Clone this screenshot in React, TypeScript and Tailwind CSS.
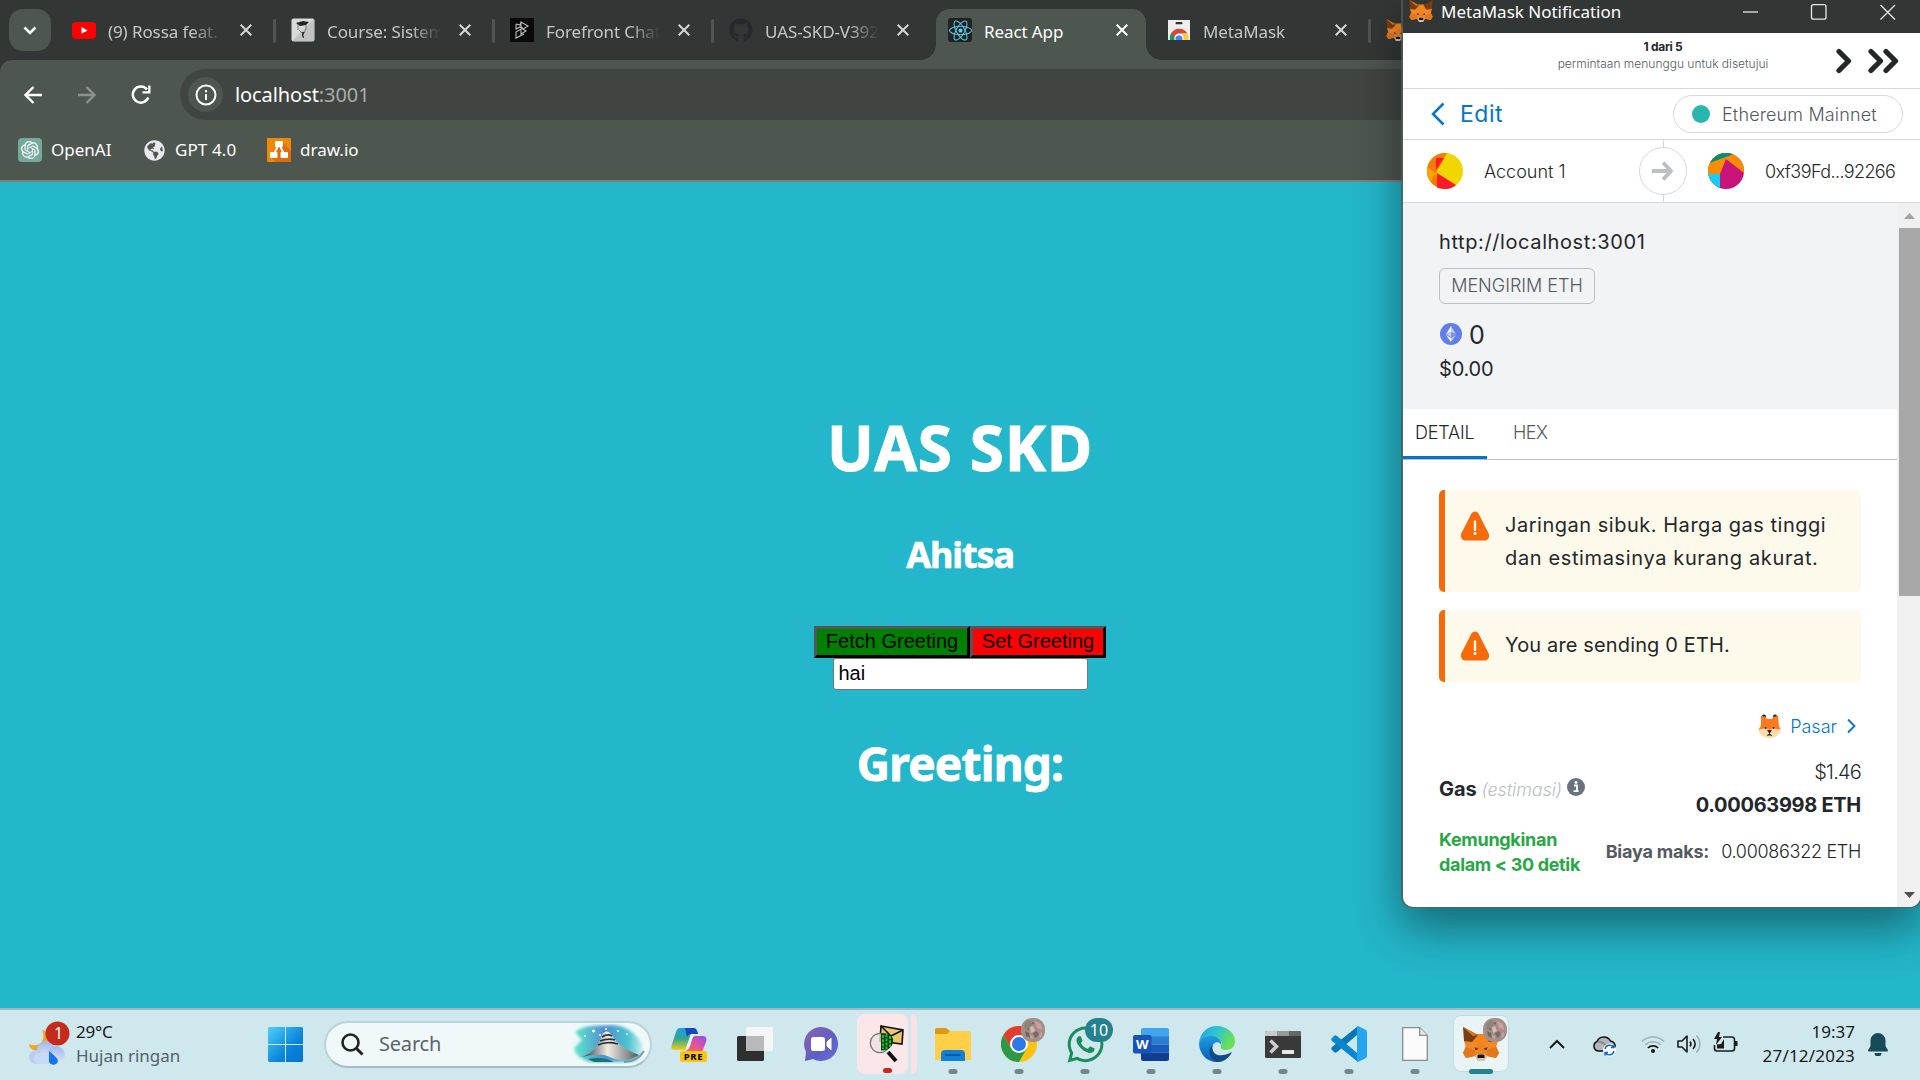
import type { ReactNode } from "react";
import { FaGithub, FaReact, FaWhatsapp, FaGlobeAmericas } from "react-icons/fa";
import { SiOpenai } from "react-icons/si";

/* ---------- icons ---------- */

function Fox({ className }: { className: string }) {
  return (
    <svg viewBox="0 0 36 34" className={className}>
      <path d="M1 14 14 7h8l13 7-2 6 3 6-3 5-9-2-3 5h-6l-3-5-9 2-3-5 3-6z" fill="#f6851b" />
      <path d="M36 0 22 8l4 7 9-1z" fill="#763d16" />
      <path d="M0 0l15 8-6 7-8-1z" fill="#763d16" />
      <path d="M0 0l15 8-5 1z" fill="#e2761b" />
      <path d="M0 26l3-7 9 4v6l-9 2zM36 26l-3-7-9 4v6l9 2z" fill="#e4761b" />
      <path d="M12 23l3-7h6l3 7-3 7h-6z" fill="#f0821f" />
      <path d="M9 15l6 1-3 7-9-3zM27 15l-6 1 3 7 9-3z" fill="#f08a2c" />
      <path d="M11.500 20l4 2-3 1zM24.500 20l-4 2 3 1z" fill="#233447" />
      <path d="M12 29l3-2h6l3 2-3 5h-6z" fill="#d7c1b3" />
      <path d="M14.500 28.500l1-1h5l1 1v2.500h-7z" fill="#161616" />
    </svg>
  );
}

function CloseX({ color }: { color: string }) {
  return (
    <svg viewBox="0 0 12 12" className="size-3 shrink-0">
      <path d="M.7.7l10.600 10.600M11.300.7L.7 11.300" stroke={color} strokeWidth="2" fill="none" />
    </svg>
  );
}

function Photo({ className }: { className: string }) {
  return (
    <svg viewBox="0 0 24 24" className={className}>
      <rect width="24" height="24" rx="11" fill="#a58e8a" />
      <path d="M3 6l5-4 4 3-3 5-5 2z" fill="#8b8478" />
      <path d="M14 3l6 3 1 6-5-2z" fill="#c9a2a0" />
      <path d="M9 9l3-1 2 5-4 2z" fill="#d8b9ae" />
      <path d="M4 13l4 2 1 5-4-2z" fill="#6f665d" />
      <path d="M12 15l4-2 2 4-4 3z" fill="#7a6a66" />
      <path d="M16 11l3 1-1 3z" fill="#cf7d8b" />
      <path d="M9 17l3 1v3l-3-1zM18 16l3-2v4l-2 2z" fill="#c3a29b" />
      <path d="M11 4l2 1-1 2zM6 10l2 1-1 2z" fill="#5e5a4d" />
    </svg>
  );
}

function YouTube() {
  return (
    <svg viewBox="0 0 24 24" className="size-6">
      <rect y="4" width="24" height="17" rx="4" fill="#f00" />
      <path d="M9.500 9l6 3.400-6 3.400z" fill="#fff" />
    </svg>
  );
}

function CourseIcon() {
  return (
    <svg viewBox="0 0 24 24" className="size-6">
      <rect x=".5" y=".5" width="23" height="23" rx="2" fill="#d9d9d9" />
      <path d="M1 23L23 1v21a1 1 0 0 1-1 1z" fill="#c2c2c2" />
      <path d="M5 5l7-2 6 1-3 3-6 1z" fill="#222" />
      <path d="M7 6v6M8 12l3 3M15 7v4l-2 4" stroke="#666" strokeWidth=".8" fill="none" />
      <path d="M11 14h2.500l-1 3 .5 3-1.500-.5-.5-2.500z" fill="#333" />
    </svg>
  );
}

function Forefront() {
  return (
    <svg viewBox="0 0 24 24" className="size-6">
      <rect width="24" height="24" fill="#0a0a0a" />
      <path d="M6 6l4 1 1-3 7 4-5 3-2-3M6 6v5l4-2 6 4-5 3v-5l-5 3v6l8-4M6 20v-5M11 4v4" stroke="#bbb" strokeWidth="1.100" fill="none" />
    </svg>
  );
}

function WebStore() {
  return (
    <svg viewBox="0 0 24 24" className="size-6">
      <rect x="1" y="2" width="22" height="20" fill="#eee" />
      <rect x="8.500" y="4" width="7" height="2.200" rx="1" fill="#333" />
      <path d="M3 22a9.300 9.300 0 0 1 2.200-8L9 22z" fill="#0f9d58" />
      <path d="M4 15.500a9.500 9.500 0 0 1 16.500 0H12a5 5 0 0 0-4.500 4z" fill="#db4437" />
      <path d="M20.600 15.500A10 10 0 0 1 21.500 22h-5.500l-1-6.500z" fill="#ffcd40" />
      <path d="M7.500 22a4.700 4.700 0 1 1 9 0z" fill="#fff" />
      <path d="M8.600 22a3.600 3.600 0 1 1 6.800 0z" fill="#4285f4" />
    </svg>
  );
}

function DrawIo() {
  return (
    <svg viewBox="0 0 24 24" className="size-6">
      <rect width="24" height="24" rx="1" fill="#f08705" />
      <path d="M15 4l9 9v11H9l-6-6 6-8z" fill="#df6c0c" />
      <path d="M11 8L7 16M13 8l4 8" stroke="#fff" strokeWidth="2" />
      <rect x="8" y="3" width="8" height="6" rx="1" fill="#fff" />
      <rect x="3" y="14" width="7.500" height="6" rx="1" fill="#fff" />
      <rect x="13.500" y="14" width="7.500" height="6" rx="1" fill="#fff" />
    </svg>
  );
}

function Jazz({ variant }: { variant: "warm" | "pink" }) {
  return (
    <svg viewBox="0 0 36 36" className="size-9 shrink-0">
      <clipPath id={"clip-" + variant}>
        <circle cx="18" cy="18" r="18" />
      </clipPath>
      {variant === "warm" ? (
        <g clipPath="url(#clip-warm)">
          <rect width="36" height="36" fill="#f2d602" />
          <path d="M20 0L9 20l3 16H0V0z" fill="#fb7a03" />
          <path d="M9 5h8L9 17z" fill="#fc1a2b" />
          <path d="M0 14l9 6-5 8-4 2z" fill="#fba300" />
          <path d="M10 20l19 12-4 4H10z" fill="#fc1a2b" />
        </g>
      ) : (
        <g clipPath="url(#clip-pink)">
          <rect width="36" height="36" fill="#c8147a" />
          <path d="M0 21V0h36v20L18 6l-6 15z" fill="#f98c01" />
          <path d="M0 10.500L26 1 20-2H0z" fill="#018e76" />
          <path d="M0 21h12v15H0z" fill="#18cdf2" />
        </g>
      )}
    </svg>
  );
}

function Warning() {
  return (
    <svg viewBox="0 0 30 30" className="h-[30px] w-[30px] shrink-0">
      <path d="M11.500 2.500a4 4 0 0 1 7 0l10 19.500c1.600 3.500 0 7.500-4 7.500h-19c-4 0-5.600-4-4-7.500z" fill="#f66a0a" />
      <path d="M15 10.500v8.500" stroke="#fffbec" strokeWidth="2.400" strokeLinecap="round" />
      <circle cx="15" cy="22.500" r="1.600" fill="#fffbec" />
    </svg>
  );
}

/* ---------- browser ---------- */

function Tab({ icon, title, active, sep }: { icon: ReactNode; title: string; active?: boolean; sep?: boolean }) {
  return (
    <>
      <div className={"relative flex h-[51px] w-[210px] shrink-0 pl-3 pt-[9px] " + (active ? "rounded-t-[14px] bg-[#4e5650]" : "")}>
        {active && (
          <>
            <div className="absolute bottom-0 -left-[15px] size-[15px] bg-[radial-gradient(circle_at_0_0,transparent_14.5px,#4e5650_15px)]" />
            <div className="absolute bottom-0 -right-[15px] size-[15px] bg-[radial-gradient(circle_at_100%_0,transparent_14.5px,#4e5650_15px)]" />
          </>
        )}
        <div className="size-6 shrink-0">{icon}</div>
        <div
          className={
            "ml-3 h-[26px] w-[118px] shrink-0 whitespace-nowrap pt-px text-[17px] leading-[26px] tracking-[-0.1px] " +
            (active ? "text-white" : "text-[#c4c7c5] [mask-image:linear-gradient(to_right,#000_84px,transparent_114px)]")
          }
        >
          {title}
        </div>
        <div className="ml-3.5 mt-1.5">
          <CloseX color={active ? "#fff" : "#d3d6d3"} />
        </div>
      </div>
      <div className="flex w-[9px] shrink-0 justify-center pt-2.5">{sep && <div className="h-6 w-[3px] rounded-sm bg-[#4e5650]" />}</div>
    </>
  );
}

function Browser() {
  return (
    <div className="flex h-[182px] shrink-0 flex-col bg-[#323735] font-['Noto_Sans',sans-serif]">
      <div className="flex h-[60px] pt-[9px]">
        <div className="ml-[9px] mr-[9px] flex size-[42px] shrink-0 items-center justify-center rounded-[14px] bg-[#4e5650]">
          <svg viewBox="0 0 14 9" className="h-[9px] w-3.5">
            <path d="M1.500 1.500L7 7l5.500-5.500" stroke="#fff" strokeWidth="2.500" fill="none" />
          </svg>
        </div>
        <Tab icon={<YouTube />} title="(9) Rossa feat." sep />
        <Tab icon={<CourseIcon />} title="Course: Sistem" sep />
        <Tab icon={<Forefront />} title="Forefront Chat" sep />
        <Tab icon={<FaGithub className="size-6 text-[#24292e]" />} title="UAS-SKD-V392" />
        <Tab
          active
          title="React App"
          icon={
            <div className="flex size-6 items-center justify-center rounded-[3px] bg-[#212121]">
              <FaReact className="size-[23px] text-[#5bd3f3]" />
            </div>
          }
        />
        <Tab icon={<WebStore />} title="MetaMask" sep />
        <div className="pl-3 pt-2.5">
          <Fox className="h-[22px] w-6" />
        </div>
      </div>
      <div className="flex h-[120px] flex-col rounded-tl-[12px] bg-[#4e5650] pt-[9px]">
        <div className="flex h-[51px] items-center">
          <svg viewBox="0 0 18 18" className="ml-6 h-[18px] w-[18px]">
            <path d="M18 9H2M9.500 1L1.500 9l8 8" stroke="#fff" strokeWidth="2.400" fill="none" />
          </svg>
          <svg viewBox="0 0 18 18" className="ml-9 h-[18px] w-[18px]">
            <path d="M0 9h16M8.500 1l8 8-8 8" stroke="#8d928e" strokeWidth="2.400" fill="none" />
          </svg>
          <svg viewBox="0 0 20 20" className="ml-[35px] h-5 w-5">
            <path d="M17.300 12.500A8 8 0 1 1 16 4.500" stroke="#fff" strokeWidth="2.500" fill="none" />
            <path d="M19.500.5v8h-8v-2.300h5.700V.5z" fill="#fff" />
          </svg>
          <div className="ml-[29px] flex h-[51px] flex-1 items-center rounded-l-[25.5px] bg-[#404542] pl-2">
            <div className="flex size-[35px] items-center justify-center rounded-full bg-[#4e5650]">
              <svg viewBox="0 0 22 22" className="h-[22px] w-[22px]">
                <circle cx="11" cy="11" r="9.500" stroke="#fff" strokeWidth="2" fill="none" />
                <path d="M11 10v6M11 6v2.200" stroke="#fff" strokeWidth="2" />
              </svg>
            </div>
            <div className="ml-3 text-[20px] leading-7 tracking-[-0.08px] text-white">
              localhost<span className="text-[#a9adaa]">:3001</span>
            </div>
          </div>
        </div>
        <div className="flex h-[60px] items-center pl-[18px] text-[17px] text-white">
          <div className="flex size-6 items-center justify-center rounded bg-[#75a99c]">
            <SiOpenai className="size-[18px]" />
          </div>
          <span className="ml-[9px] w-[85px]">OpenAI</span>
          <FaGlobeAmericas className="ml-2 size-[21px] text-[#e8eaed]" />
          <span className="ml-[10px] w-[92px] tracking-[0.1px]">GPT 4.0</span>
          <DrawIo />
          <span className="ml-[9px]">draw.io</span>
        </div>
      </div>
      <div className="h-0.5 bg-[#7d817b]" />
    </div>
  );
}

function Page() {
  return (
    <main className="flex h-[826px] shrink-0 flex-col items-center bg-[#24b6ca] pt-[225px] font-['Noto_Sans',sans-serif] text-white">
      <h1 className="h-20 text-[62px] leading-[80px] font-bold tracking-[0.8px] [-webkit-text-stroke:1px_white]">UAS SKD</h1>
      <h3 className="mt-[43px] h-[50px] text-[36px] leading-[50px] font-bold tracking-[-1.1px] [-webkit-text-stroke:0.6px_white]">Ahitsa</h3>
      <div className="mt-[46px] flex h-8 font-['Liberation_Sans',sans-serif] text-[20px] leading-6 text-black">
        <button className="w-[156px] border-[3px] border-t-[#555] border-r-black border-b-black border-l-[#555] bg-[#008000] pb-0.5">Fetch Greeting</button>
        <button className="w-[136px] border-[3px] border-t-[#555] border-r-black border-b-black border-l-[#555] bg-[#ff0000] pb-0.5">Set Greeting</button>
      </div>
      <div className="flex h-8 w-[255px] items-center rounded-[3px] border border-[#767676] bg-white pl-[5px] font-['Liberation_Sans',sans-serif] text-[20px] leading-6 text-black">
        <span className="-mt-0.5">hai</span>
      </div>
      <h2 className="mt-[43px] h-[60px] text-[46px] leading-[60px] font-bold tracking-[-0.8px] [-webkit-text-stroke:0.8px_white]">Greeting:</h2>
    </main>
  );
}

/* ---------- wallet popup ---------- */

function Alert({ children, className }: { children: ReactNode; className: string }) {
  return (
    <div className={"flex w-[422px] rounded-[5px] border-l-[6px] border-[#f66a0a] bg-[#fefaeb] pt-[19px] pl-[15px] text-[20px] leading-[33px] text-[#24272a] " + className}>
      <div className="pt-0.5">
        <Warning />
      </div>
      <div className="ml-[15px] whitespace-nowrap">{children}</div>
    </div>
  );
}

function Popup() {
  return (
    <div className="absolute top-0 left-[1403px] flex h-[907px] w-[517px] flex-col overflow-hidden rounded-b-[10px] bg-white font-['Inter',sans-serif] text-[#24272a]">
      <div className="flex h-[33px] shrink-0 items-start bg-[#323735] pl-1.5 font-['Noto_Sans',sans-serif]">
        <Fox className="h-[22px] w-6" />
        <span className="ml-2 w-[301px] text-[17px] leading-[23px] text-white">MetaMask Notification</span>
        <svg viewBox="0 0 154 24" className="h-6 w-[154px]" fill="none" stroke="#e6e8e7">
          <path d="M1 12h15" strokeWidth="1.300" />
          <rect x="69.500" y="4.700" width="14.500" height="14.500" rx="2" strokeWidth="1.300" />
          <path d="M138.500 5l14.500 14.500M153 5l-14.500 14.500" strokeWidth="1.300" />
        </svg>
      </div>
      <div className="flex h-14 shrink-0 border-b border-[#d6d9dc] pl-[152px]">
        <div className="w-[216px] pt-[5px] text-center text-[12px] leading-[17px] whitespace-nowrap">
          <div className="font-bold tracking-[-0.3px]">1 dari 5</div>
          <div className="font-light text-[#535a61]">permintaan menunggu untuk disetujui</div>
        </div>
        <svg viewBox="0 0 66 26" className="mt-[15px] ml-[64px] h-[26px] w-[66px]" fill="none" stroke="#24272a" strokeWidth="5.200" strokeLinecap="round" strokeLinejoin="round">
          <path d="M4 3.500l9.500 9.500L4 22.500" />
          <path d="M36 3.500l9.500 9.500L36 22.500M51 3.500l9.500 9.500L51 22.500" />
        </svg>
      </div>
      <div className="flex h-[51px] shrink-0 items-center border-b border-[#d6d9dc] pl-7">
        <svg viewBox="0 0 14 24" className="h-6 w-3.5">
          <path d="M12.500 1.500L2 12l10.500 10.500" stroke="#0376c9" strokeWidth="2.500" fill="none" />
        </svg>
        <span className="ml-[15px] w-[213px] text-[23px] tracking-[0.5px] text-[#0376c9]">Edit</span>
        <div className="flex h-[38px] w-[230px] items-center rounded-full border border-[#d6d9dc] pl-[18px] text-[18px] font-light text-[#535a61]">
          <div className="size-[18px] rounded-full bg-[#29b6af]" />
          <span className="ml-3 tracking-[0.15px] whitespace-nowrap">Ethereum Mainnet</span>
        </div>
      </div>
      <div className="flex h-[63px] shrink-0 items-center border-b border-[#d6d9dc] pl-6 text-[18px] font-light">
        <Jazz variant="warm" />
        <span className="ml-[21px] w-[155px]">Account 1</span>
        <div className="flex w-12 flex-col items-center">
          <div className="h-[7px] w-px bg-[#d6d9dc]" />
          <div className="flex size-12 items-center justify-center rounded-full border border-[#d6d9dc]">
            <svg viewBox="0 0 22 20" className="h-5 w-[22px]" fill="none" stroke="#bbc0c5" strokeWidth="4" strokeLinejoin="round">
              <path d="M0 10h18M11 1.500L19 10l-8 8.500" />
            </svg>
          </div>
          <div className="h-[7px] w-px bg-[#d6d9dc]" />
        </div>
        <div className="w-[21px]" />
        <Jazz variant="pink" />
        <span className="ml-[21px] tracking-[-0.6px] whitespace-nowrap">0xf39Fd...92266</span>
      </div>

      <div className="flex h-[704px]">
        <div className="w-[494px]">
          <section className="h-[206px] bg-[#f2f3f4] pt-[23px] pl-9">
            <div className="h-[33px] text-[20px] leading-[33px] tracking-[0.6px]">http://localhost:3001</div>
            <div className="mt-[9px] flex h-9 w-[156px] items-center justify-center rounded-[6px] border border-[#bbc0c5] pb-px text-[18px] font-light text-[#535a61]">MENGIRIM ETH</div>
            <div className="mt-[14px] flex h-8 items-center">
              <svg viewBox="0 0 22 22" className="ml-px h-[22px] w-[22px]">
                <circle cx="11" cy="11" r="11" fill="#627eea" />
                <path d="M11 3v6l5 2.200z" fill="#c0cbf6" />
                <path d="M11 3l-5 8.200L11 9z" fill="#fff" />
                <path d="M11 15v4l5-7z" fill="#c0cbf6" />
                <path d="M11 19v-4l-5-3z" fill="#fff" />
                <path d="M11 14l5-2.800L11 9z" fill="#8197ee" />
                <path d="M6 11.200l5 2.800V9z" fill="#c0cbf6" />
              </svg>
              <span className="ml-[7px] pt-px text-[25px] leading-8">0</span>
            </div>
            <div className="mt-[3px] text-[20px] leading-[33px] tracking-[-0.2px]">$0.00</div>
          </section>
          <div className="flex h-[51px] border-b border-[#bbc0c5] text-[18px] leading-[48px]">
            <div className="h-[50px] w-[84px] border-b-[3px] border-[#0376c9] pl-3 font-light tracking-[-0.2px]">DETAIL</div>
            <div className="ml-[26px] font-light tracking-[-0.5px] text-[#535a61]">HEX</div>
          </div>
          <div className="w-[458px] pt-[30px] pl-9">
            <Alert className="h-[102px]">
              <div className="tracking-[0.52px]">Jaringan sibuk. Harga gas tinggi</div>
              <div className="tracking-[0.63px]">dan estimasinya kurang akurat.</div>
            </Alert>
            <Alert className="mt-[18px] h-[72px]">
              <div className="tracking-[0.14px]">You are sending 0 ETH.</div>
            </Alert>
            <div className="mt-[30px] flex h-7 items-center justify-end pr-[5px] text-[18px] text-[#0376c9]">
              <svg viewBox="0 0 23 24" className="h-6 w-[23px]">
                <path d="M3 2c3-1 5 0 6 3h5c1-3 3-4 6-3l1 10 2 4H0l3-4z" fill="#ff7a1f" />
                <path d="M4 2C5 0 8 0 8 3zM19 2c-1-2-4-2-4 1z" fill="#222" />
                <path d="M0 15c4 1 6-1 8-1l3.500 2 3.500-2c2 0 4 2 8 1-1 6-6 9-11.500 9S1 21 0 15z" fill="#ffdca8" />
                <circle cx="7.500" cy="14" r="1" fill="#222" />
                <circle cx="15.500" cy="14" r="1" fill="#222" />
                <path d="M9.500 16.500h4l-2 2.500zM11.500 19v1.500M9 21.500l2.500-1.500 2.500 1.500" stroke="#222" strokeWidth=".8" fill="#222" />
              </svg>
              <span className="ml-[9px] font-light">Pasar</span>
              <svg viewBox="0 0 9 16" className="ml-[10px] h-4 w-[9px]">
                <path d="M1 1.500L7.500 8 1 14.500" stroke="#0376c9" strokeWidth="1.800" fill="none" />
              </svg>
            </div>
            <div className="mt-4 flex h-[66px] w-[422px] items-center justify-between">
              <div className="flex items-center">
                <span className="text-[20px] font-bold tracking-[-0.1px]">Gas</span>
                <span className="ml-[5px] text-[18px] font-light tracking-[-0.1px] text-[#bbc0c5] italic">(estimasi)</span>
                <svg viewBox="0 0 18 18" className="mb-1 ml-[5px] h-[18px] w-[18px]">
                  <circle cx="9" cy="9" r="9" fill="#6a737d" />
                  <path d="M7 7.500h3V13M6.500 13.200h5" stroke="#fff" strokeWidth="1.800" fill="none" />
                  <circle cx="9" cy="4.500" r="1.400" fill="#fff" />
                </svg>
              </div>
              <div className="text-right text-[20px] leading-[33px]">
                <div className="font-light tracking-[-0.8px]">$1.46</div>
                <div className="font-bold tracking-[-0.3px]">0.00063998 ETH</div>
              </div>
            </div>
            <div className="mt-[5px] flex h-[50px] w-[422px] items-center justify-between text-[18px] whitespace-nowrap">
              <div className="leading-[25px] font-bold text-[#28a745]">
                <div className="tracking-[-0.3px]">Kemungkinan</div>
                <div className="tracking-[-0.33px]">dalam &lt; 30 detik</div>
              </div>
              <div className="-mt-px flex">
                <span className="mr-3 font-bold tracking-[-0.2px] text-[#535a61]">Biaya maks:</span>
                <span className="font-light tracking-[-0.3px]">0.00086322 ETH</span>
              </div>
            </div>
          </div>
        </div>
        <div className="flex w-[23px] flex-col items-end bg-[#f0f0f0]">
          <svg viewBox="0 0 21 25" className="h-[25px] w-[21px]">
            <path d="M5 16h11l-5.500-6z" fill="#a3a3a3" />
          </svg>
          <div className="h-[368px] w-[21px] bg-[#a8a8a8]" />
          <svg viewBox="0 0 21 25" className="mt-auto h-[25px] w-[21px]">
            <path d="M5 10h11l-5.500 6z" fill="#505050" />
          </svg>
        </div>
      </div>
    </div>
  );
}

/* ---------- taskbar ---------- */

function Slot({ children, dot }: { children: ReactNode; dot?: string }) {
  return (
    <div className="relative flex h-[70px] w-[66px] shrink-0 items-center justify-center">
      {children}
      {dot && <div className={"absolute bottom-[5px] left-1/2 h-[5px] -translate-x-1/2 rounded-full " + dot} />}
    </div>
  );
}

const grayDot = "w-[9px] bg-[#75868a]";

function Taskbar() {
  return (
    <footer className="flex h-[72px] shrink-0 items-center border-t-2 border-[#a3b9bf] bg-[#cfe8ee] pb-0.5 font-['Noto_Sans',sans-serif] text-[#1b1b1b]">
      <div className="flex w-[268px] items-center pl-7">
        <svg viewBox="0 0 42 46" className="h-[46px] w-[42px]">
          <defs>
            <linearGradient id="cloud" x1="0" y1="0" x2="0" y2="1">
              <stop offset="0" stopColor="#9db9ee" />
              <stop offset="1" stopColor="#dfe7f7" />
            </linearGradient>
          </defs>
          <path d="M14 9c5 12-4 18-13 14 0 6 8 8 13 6l8-8c1-5-2-11-8-12z" fill="#f5a524" />
          <circle cx="18" cy="29" r="9" fill="url(#cloud)" />
          <circle cx="8" cy="36" r="7" fill="#b9cdf3" />
          <circle cx="28" cy="34" r="9" fill="url(#cloud)" />
          <rect x="6" y="32" width="24" height="11" rx="5" fill="#c9d8f5" />
          <path d="M21 30c7 6 9 8 9 10a4.800 4.800 0 0 1-9 1z" fill="#1673f5" />
          <circle cx="29.500" cy="12.500" r="12" fill="#c42b1c" />
          <text x="30.500" y="18" fontSize="16" fill="#fff" textAnchor="middle" fontFamily="Noto Sans">1</text>
        </svg>
        <div className="ml-1.5 text-[17px] leading-[24px]">
          <div className="tracking-[-0.2px]">29°C</div>
          <div className="text-[#536266]">Hujan ringan</div>
        </div>
      </div>
      <svg viewBox="0 0 35 35" className="h-[35px] w-[35px]">
        <defs>
          <linearGradient id="win" x1="0" y1="0" x2="1" y2="1">
            <stop offset="0" stopColor="#4dd0fb" />
            <stop offset=".6" stopColor="#0c85db" />
            <stop offset="1" stopColor="#0074cf" />
          </linearGradient>
        </defs>
        <path d="M1 0h16v17H0V1zM18 0h16l1 1v16H18zM0 18h17v17H1l-1-1zM18 18h17v16l-1 1H18z" fill="url(#win)" />
      </svg>
      <div className="ml-[21px] flex h-[47px] w-[328px] items-center rounded-full border-2 border-[#bbd3da] border-b-[#a5bec5] bg-[#f0f8fa] pl-[15px]">
        <svg viewBox="0 0 23 23" className="h-[23px] w-[23px]">
          <circle cx="9.500" cy="9.500" r="8" stroke="#222" strokeWidth="2.600" fill="none" />
          <path d="M15.500 15.500l6 6" stroke="#222" strokeWidth="3" />
        </svg>
        <span className="ml-[15px] w-[193px] text-[20px] tracking-[-0.2px] text-[#5b6467]">Search</span>
        <svg viewBox="0 0 74 40" className="h-10 w-[74px]">
          <defs>
            <linearGradient id="aurora" x1="0" y1="0" x2="1" y2="0">
              <stop offset="0" stopColor="#5fe8c6" />
              <stop offset=".45" stopColor="#4f8fd3" />
              <stop offset=".8" stopColor="#4cc5cf" />
              <stop offset="1" stopColor="#c9edf0" />
            </linearGradient>
            <linearGradient id="dome" x1="0" y1="0" x2="1" y2="0">
              <stop offset="0" stopColor="#27313b" />
              <stop offset=".45" stopColor="#f2ebe2" />
              <stop offset="1" stopColor="#4f5b60" />
            </linearGradient>
            <filter id="soft" x="-20%" y="-20%" width="140%" height="140%">
              <feGaussianBlur stdDeviation="1.600" />
            </filter>
          </defs>
          <path d="M3 8C12 0 28 2 38 1c14 0 24 6 31 17 3 8 2 17-8 20H18C8 35 3 30 2 24l8-8z" fill="url(#aurora)" filter="url(#soft)" />
          <path d="M10 33C22 29 26 21 30 11c2-4 6-5 9-1 6 9 12 15 28 21-8 6-20 6-27 3-9-5-18-4-30-1z" fill="url(#dome)" />
          <path d="M30 13c3-2 7-3 10-1M28 17c5-2 9-3 15-1M26 21c6-3 13-3 20-1" stroke="#2b3740" strokeWidth="1.800" fill="none" />
          <path d="M16 35c9-2 19-1 26 3H22z" fill="#10786f" />
          <path d="M72 27c-5 8-12 11-20 11" stroke="#789aa5" strokeWidth="2" fill="none" />
          <path d="M20 7h3M21.500 5.500v3M12 12h2M33 5h2M45 7h2M27 11h2M54 10h2" stroke="#fff" strokeWidth="1.300" />
        </svg>
      </div>
      <div className="w-1 shrink-0" />

      <Slot>
        <svg viewBox="0 0 36 36" className="h-9 w-9">
          <defs>
            <linearGradient id="cp1" x1="0" y1="0" x2="0" y2="1">
              <stop offset="0" stopColor="#1e9be8" />
              <stop offset=".5" stopColor="#35a98b" />
              <stop offset="1" stopColor="#f2cc1b" />
            </linearGradient>
            <linearGradient id="cp2" x1="0" y1="1" x2="1" y2="0">
              <stop offset="0" stopColor="#f9734e" />
              <stop offset=".5" stopColor="#e5539b" />
              <stop offset="1" stopColor="#8a4ef0" />
            </linearGradient>
          </defs>
          <path d="M9 2h14c2 0 3 2 4 6h-7L15 24H3c-3 0-3-3-2-6L5 6c1-3 2-4 4-4z" fill="url(#cp1)" />
          <path d="M14 2h9c2 0 3 2 4 6h-7c-2 0-3 1-4 3z" fill="#1748bd" />
          <path d="M24 10h8c3 0 4 3 3 6l-4 10H12l4-2c2-1 3-4 4-8 1-4 2-6 4-6z" fill="url(#cp2)" />
          <path d="M20 8h3l-3 8c-1 5-3 8-6 9l3-9z" fill="#e8f6f8" />
          <rect x="9" y="25" width="27" height="11" rx="2.500" fill="#ffc50a" />
          <text x="22.500" y="34" fontSize="9.500" fontWeight="800" letterSpacing=".7" textAnchor="middle" fill="#111" fontFamily="Noto Sans">PRE</text>
        </svg>
      </Slot>
      <Slot>
        <svg viewBox="0 0 36 34" className="h-[34px] w-9">
          <rect x="0" y="9" width="27" height="25" rx="1.500" fill="#2f2f2f" />
          <rect x="9" y="0" width="27" height="24" rx="1" fill="#f3f5f6" />
          <rect x="9" y="9" width="18" height="15" fill="#b7b9ba" />
        </svg>
      </Slot>
      <Slot>
        <svg viewBox="0 0 34 34" className="h-[34px] w-[34px]">
          <defs>
            <linearGradient id="chat" x1="0" y1="0" x2="1" y2="1">
              <stop offset="0" stopColor="#8f62ad" />
              <stop offset=".6" stopColor="#5b5fc7" />
              <stop offset="1" stopColor="#6a6fd6" />
            </linearGradient>
          </defs>
          <path d="M17 0a17 17 0 1 1-8 32l-8 2 1-9A17 17 0 0 1 17 0z" fill="url(#chat)" />
          <rect x="7" y="10" width="14" height="14" rx="2.500" fill="#fff" />
          <path d="M23 15l4-4v12l-4-4z" fill="#fff" stroke="#fff" strokeLinejoin="round" />
        </svg>
      </Slot>
      <Slot>
        <div className="flex h-[60px] w-[60px] gap-[3px]">
          <div className="relative flex w-[51px] items-center justify-center rounded-lg bg-[#fbe6e9]">
            <svg viewBox="0 0 36 38" className="ml-2 h-[38px] w-9">
              <path d="M12 1l22 4-1 14-22-3z" fill="#edc869" stroke="#111" strokeWidth="1.600" />
              <path d="M12 1l10 10 12-6" stroke="#111" strokeWidth="1.600" fill="none" />
              <path d="M12 9c8-2 13 2 12 8s-6 9-12 8z" fill="#0c3d12" />
              <circle cx="11" cy="18" r="9.700" fill="#eae3e3" fillOpacity=".75" stroke="#77736f" strokeWidth="1.300" />
              <path d="M12 8.500v17c8 0 11-4 11-9s-4-9-11-8z" fill="#0c3d12" />
              <path d="M14 10v14M17.500 9v15M21 11v11" stroke="#18c22a" strokeWidth="2" strokeDasharray="3 1.200" />
              <path d="M19 27l8 9" stroke="#111" strokeWidth="4" />
            </svg>
            <div className="absolute bottom-px left-[26px] h-[5px] w-[9px] rounded-full bg-[#c42b1c]" />
          </div>
          <div className="w-1.5 rounded-r-lg bg-[#fbe0e4]" />
        </div>
      </Slot>
      <Slot dot={grayDot}>
        <svg viewBox="0 0 36 33" className="h-[33px] w-9">
          <path d="M0 2a2 2 0 0 1 2-2h9l4 3v5H0z" fill="#dc9a12" />
          <path d="M0 6h12l3-3h19a2 2 0 0 1 2 2v27H0z" fill="#ffcf48" />
          <path d="M6 33v-7a4 4 0 0 1 4-4h16a4 4 0 0 1 4 4v7z" fill="#1180d8" />
          <path d="M10 27h16" stroke="#0c59a4" strokeWidth="2" />
        </svg>
      </Slot>
      <Slot dot={grayDot}>
        <svg viewBox="0 0 36 36" className="h-9 w-9">
          <circle cx="18" cy="18" r="18" fill="#ffc20e" />
          <path d="M2.400 9A18 18 0 0 1 33.600 9H18l-7.800 13.500z" fill="#e33b2e" />
          <path d="M2.400 9A18 18 0 0 0 18 36l7.800-13.500H10.200z" fill="#2a9a48" />
          <circle cx="18" cy="18" r="9" fill="#fff" />
          <circle cx="18" cy="18" r="7" fill="#2c78e8" />
        </svg>
        <Photo className="absolute top-[9px] left-[35px] size-6" />
      </Slot>
      <Slot dot={grayDot}>
        <FaWhatsapp className="size-[41px] text-[#1a8d5a]" />
        <div className="absolute top-[9px] left-[33px] flex h-6 w-7 items-center justify-center rounded-full bg-[#25818f] text-[16px] leading-6 text-white">10</div>
      </Slot>
      <Slot dot={grayDot}>
        <svg viewBox="0 0 36 33" className="h-[33px] w-9">
          <path d="M8 2a2 2 0 0 1 2-2h24a2 2 0 0 1 2 2v7H8z" fill="#41a5ee" />
          <path d="M8 8.500h28v8H8z" fill="#2b7cd3" />
          <path d="M8 16.500h28v8H8z" fill="#185abd" />
          <path d="M8 24.500h28V31a2 2 0 0 1-2 2H10a2 2 0 0 1-2-2z" fill="#103f91" />
          <rect x="0" y="7" width="18.500" height="18.500" rx="2" fill="#1853b6" />
          <text x="9.200" y="21" fontSize="13" fontWeight="700" textAnchor="middle" fill="#fff" fontFamily="Noto Sans">W</text>
        </svg>
      </Slot>
      <Slot dot={grayDot}>
        <svg viewBox="0 0 36 36" className="h-9 w-9">
          <defs>
            <linearGradient id="eg1" x1="0" y1="0" x2="1" y2=".4">
              <stop offset="0" stopColor="#1f9fdf" />
              <stop offset=".5" stopColor="#2fc4d4" />
              <stop offset="1" stopColor="#6ae04f" />
            </linearGradient>
            <linearGradient id="eg2" x1="0" y1="0" x2="0" y2="1">
              <stop offset="0" stopColor="#1b9de2" />
              <stop offset="1" stopColor="#0c5cb4" />
            </linearGradient>
          </defs>
          <path d="M0 17C1 7 8 0 18 0s18 7 18 15c0 6-4 9-9 9-4 0-6-2-5-4 2-4-1-9-8-9C7 11 2 13 0 17z" fill="url(#eg1)" />
          <path d="M0 17c2-5 7-7 12-7 8 0 11 5 10 9-1-4-8-4-9 3-1 6 4 13 11 13a18 18 0 0 1-6 1C8 36 0 28 0 17z" fill="url(#eg2)" />
          <path d="M13.500 19C12 30 22 32 33 26c-3 6-8 10-15 10-8-3-10-12-4.500-17z" fill="#114a8b" />
        </svg>
      </Slot>
      <Slot dot={grayDot}>
        <svg viewBox="0 0 36 27" className="h-[27px] w-9">
          <rect width="36" height="27" rx="1.500" fill="#393939" />
          <path d="M0 5V1.500A1.500 1.500 0 0 1 1.500 0H12v5z" fill="#c9c9c9" />
          <path d="M12 0h12v5H12z" fill="#999" />
          <path d="M24 0h10.500A1.500 1.500 0 0 1 36 1.500V5H24z" fill="#666" />
          <path d="M5.500 9.500l6 6-6 6" stroke="#ccc" strokeWidth="3.500" fill="none" />
          <rect x="17" y="19" width="12" height="4" rx=".5" fill="#e6e6e6" />
        </svg>
      </Slot>
      <Slot dot={grayDot}>
        <svg viewBox="0 0 36 36" className="h-9 w-9">
          <path d="M27 0l-1 9-20 17c-1 1-2 1-3 0l-2-2c-1-1-1-2 0-3z" fill="#0877b9" />
          <path d="M27 36l-1-9L6 10C5 9 4 9 3 10l-2 2c-1 1-1 2 0 3z" fill="#0a86d1" />
          <path d="M26 .5c.5-.5 1-.5 2 0l7 3.500 1 1.500v25L35 32l-7 3.500c-1 .5-2 0-2-.5z" fill="#25a4f2" />
        </svg>
      </Slot>
      <Slot dot={grayDot}>
        <svg viewBox="0 0 26 34" className="h-[34px] w-[26px]">
          <path d="M.7.7h17l7.600 7.600v25H.7z" fill="#fafafa" stroke="#8b8b8b" strokeWidth="1.300" />
          <path d="M17.700.7v7.600h7.600" fill="#e9e9e9" stroke="#8b8b8b" strokeWidth="1.300" />
        </svg>
      </Slot>
      <Slot dot="w-6 bg-[#25818f]">
        <div className="absolute top-1.5 left-[5px] h-[57px] w-14 rounded-lg border border-[#c3dbe1] bg-[#e9f4f7]" />
        <Fox className="relative h-[34px] w-9" />
        <Photo className="absolute top-[9px] left-[35px] size-6" />
      </Slot>

      <div className="ml-auto flex shrink-0 items-center pr-8">
        <svg viewBox="0 0 16 10" className="h-2.5 w-4">
          <path d="M1 9l7-7 7 7" stroke="#1b1b1b" strokeWidth="2" fill="none" />
        </svg>
        <svg viewBox="0 0 25 22" className="mt-1 ml-[27px] h-[22px] w-[25px]">
          <path d="M6 16a5 5 0 0 1-1-9.500A7.500 7.500 0 0 1 18.500 6 5 5 0 0 1 23 12l-3 4z" fill="#b5b5b5" stroke="#111" strokeWidth="1.500" />
          <path d="M6 7c3-1 6 1 12 7" stroke="#8d8d8d" strokeWidth="2" fill="none" />
          <circle cx="17.500" cy="15" r="6.500" fill="#fff" />
          <path d="M13 14a4.800 4.800 0 0 1 8.500-2M22 16a4.800 4.800 0 0 1-8.500 2M22 9.500v3h-3M13 20.500v-3h3" stroke="#0b66c8" strokeWidth="1.400" fill="none" />
        </svg>
        <svg viewBox="0 0 24 18" className="ml-6 h-[18px] w-6" fill="none" strokeWidth="1.600">
          <path d="M.8 6.500a16 16 0 0 1 22.400 0" stroke="#9fb3b8" />
          <path d="M4 10a11.300 11.300 0 0 1 16 0" stroke="#9fb3b8" />
          <path d="M6.800 13a7.400 7.400 0 0 1 10.400 0" stroke="#1b1b1b" />
          <circle cx="12" cy="16" r="2" fill="#1b1b1b" />
        </svg>
        <svg viewBox="0 0 24 20" className="ml-3 h-5 w-6" fill="none" strokeWidth="1.600">
          <path d="M1 7h4l5-5v16l-5-5H1z" stroke="#1b1b1b" strokeLinejoin="round" />
          <path d="M13 7.500c1.200 1.500 1.200 3.500 0 5M16 5c2.500 3 2.500 7 0 10" stroke="#1b1b1b" />
          <path d="M19.500 1.500c4.500 5 4.500 12 0 17" stroke="#9fb3b8" />
        </svg>
        <svg viewBox="0 0 25 21" className="-mt-1 ml-3 h-[21px] w-[25px]">
          <path d="M10 5h9a2.500 2.500 0 0 1 2.500 2.500v9A2.500 2.500 0 0 1 19 19H4a2.500 2.500 0 0 1-2.500-2.500V13" stroke="#1b1b1b" strokeWidth="1.600" fill="none" />
          <path d="M22 9h2.500v5H22zM4 16.500v-4L8 12l3-5v9.500zM5 0L1 7h3l-1 6 6-8H6l1-5z" fill="#1b1b1b" />
        </svg>
        <div className="ml-6 w-[93px] text-right text-[17px] leading-[24.5px]">
          <div>19:37</div>
          <div className="tracking-[0.2px] whitespace-nowrap">27/12/2023</div>
        </div>
        <svg viewBox="0 0 20 23" className="ml-[13px] h-[23px] w-5">
          <path d="M10 0a7.500 7.500 0 0 1 7.500 7.500V13l2.300 4c.4 1 0 1.500-.8 1.500H1c-.8 0-1.200-.5-.8-1.500l2.300-4V7.500A7.500 7.500 0 0 1 10 0zM6.500 20h7a3.500 3.500 0 0 1-7 0z" fill="#184a57" />
        </svg>
      </div>
    </footer>
  );
}

export default function App() {
  return (
    <div className="relative flex h-[1080px] w-[1920px] flex-col overflow-hidden">
      <Browser />
      <Page />
      <div className="absolute top-0 left-[1401px] h-[908px] w-[521px] rounded-b-[11px] bg-[#4e5855]/80 shadow-[0_20px_46px_rgba(0,0,0,0.42)]" />
      <Popup />
      <div className="relative">
        <Taskbar />
      </div>
    </div>
  );
}
